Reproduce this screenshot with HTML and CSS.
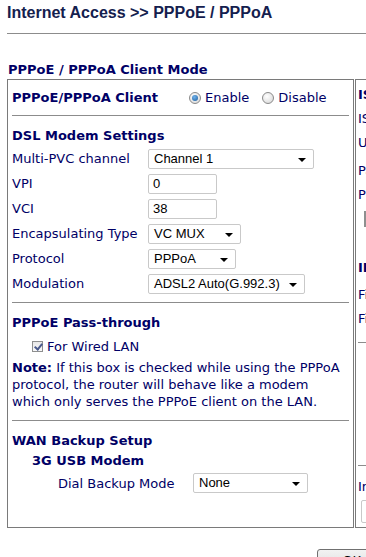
FILE: index.html
```html
<!DOCTYPE html>
<html lang="en">
<head>
    <meta charset="UTF-8">
    <title>Internet Access &gt;&gt; PPPoE / PPPoA</title>
    <link rel="stylesheet" href="styles.css">
</head>
<body>
    <h1 class="page-title">Internet Access &gt;&gt; PPPoE / PPPoA</h1>
    <div class="title-rule"></div>

    <h2 class="mode-title">PPPoE / PPPoA Client Mode</h2>

    <div class="panels">
        <div class="panel panel-left">
            <div class="client-row">
                <span class="head">PPPoE/PPPoA Client</span>
                <label class="radio"><span class="radio-dot checked"></span>Enable</label>
                <label class="radio"><span class="radio-dot"></span>Disable</label>
            </div>
            <div class="rule"></div>

            <div class="head section-head">DSL Modem Settings</div>
            <div class="form-grid">
                <span>Multi-PVC channel</span>
                <div class="select w-pvc">Channel 1</div>
                <span>VPI</span>
                <div class="text-input">0</div>
                <span>VCI</span>
                <div class="text-input">38</div>
                <span>Encapsulating Type</span>
                <div class="select w-encap">VC MUX</div>
                <span>Protocol</span>
                <div class="select w-proto">PPPoA</div>
                <span>Modulation</span>
                <div class="select w-mod">ADSL2 Auto(G.992.3)</div>
            </div>
            <div class="rule"></div>

            <div class="head section-head">PPPoE Pass-through</div>
            <label class="check-row"><span class="check-box"></span>For Wired LAN</label>
            <p class="note"><b>Note:</b> If this box is checked while using the PPPoA protocol, the router will behave like a modem which only serves the PPPoE client on the LAN.</p>
            <div class="rule"></div>

            <div class="head section-head">WAN Backup Setup</div>
            <div class="head sub-head">3G USB Modem</div>
            <div class="backup-row">
                <span>Dial Backup Mode</span>
                <div class="select w-backup">None</div>
            </div>
        </div>

        <div class="panel panel-right">
            <div class="r-line head r-first">ISP Access Setup</div>
            <div class="r-line">ISP Name</div>
            <div class="r-line">Username</div>
            <div class="r-line r-gap">Password</div>
            <div class="r-line">PPP Authentication</div>
            <div class="r-check"><span class="check-box small"></span></div>
            <div class="r-line head r-ip">IP Address From ISP</div>
            <div class="r-line">Fixed IP</div>
            <div class="r-line">Fixed IP Address</div>
            <div class="rule r-rule"></div>
            <div class="r-spacer"></div>
            <div class="rule r-rule"></div>
            <div class="r-line r-in">Index</div>
            <div class="r-input"></div>
        </div>
    </div>

    <div class="actions">
        <button class="ok-btn">OK</button>
    </div>
</body>
</html>
```

FILE: styles.css
```css
html {
    overflow: hidden;
}
body {
    margin: 0;
    padding: 0 0 0 7px;
    width: 560px;
    font-family: "DejaVu Sans", Verdana, sans-serif;
    font-size: 12px;
    color: #000066;
    background: #fff;
}
.page-title {
    margin: 0;
    padding-top: 3px;
    height: 30px;
    line-height: 20px;
    font-family: "Liberation Sans", Arial, sans-serif;
    font-size: 16px;
    font-weight: bold;
    color: #14204e;
}
.title-rule {
    height: 1px;
    background: #8c8c8c;
}
.mode-title {
    margin: 0;
    padding: 27px 0 0 1px;
    height: 18px;
    line-height: 18px;
    font-size: 13px;
    font-weight: bold;
}
.panels {
    display: flex;
    align-items: stretch;
}
.panel {
    border: 1px solid #7a7a7a;
    box-sizing: border-box;
    height: 449px;
}
.panel-left {
    width: 347px;
    padding: 0 4px;
}
.panel-right {
    margin-left: 1px;
    width: 200px;
    padding: 0 2px;
    border-right: none;
}
.head {
    font-weight: bold;
    font-size: 13px;
}
.client-row {
    display: flex;
    align-items: center;
    height: 35px;
}
.client-row .head {
    width: 177px;
}
.radio {
    display: flex;
    align-items: center;
    font-size: 13px;
    margin-right: 13px;
}
.radio-dot {
    width: 12px;
    height: 12px;
    margin-right: 4px;
    border-radius: 50%;
    border: 1px solid #8a8a8a;
    box-sizing: border-box;
    background: radial-gradient(circle at 40% 35%, #ffffff, #d4d4d4);
    position: relative;
}
.radio-dot.checked::after {
    content: "";
    position: absolute;
    left: 2px;
    top: 2px;
    width: 6px;
    height: 6px;
    border-radius: 50%;
    background: radial-gradient(circle at 40% 35%, #6fb2ec, #1d5c9a);
}
.rule {
    height: 1px;
    background: #8c8c8c;
}
.section-head {
    height: 20px;
    line-height: 20px;
    padding-top: 10px;
}
.form-grid {
    display: grid;
    grid-template-columns: 136px auto;
    grid-auto-rows: 25px;
    align-items: center;
    justify-items: start;
    font-size: 13px;
    padding-bottom: 6px;
}
.select,
.text-input {
    height: 20px;
    box-sizing: border-box;
    border: 1px solid #c9c9c9;
    border-radius: 2px;
    background: #fff;
    font-family: "Liberation Sans", Arial, sans-serif;
    font-size: 13px;
    line-height: 18px;
    color: #000;
    padding-left: 4px;
    position: relative;
}
.select {
    padding-left: 5px;
}
.select::after {
    content: "";
    position: absolute;
    right: 7px;
    top: 8px;
    border-left: 4px solid transparent;
    border-right: 4px solid transparent;
    border-top: 4px solid #000;
}
.text-input {
    width: 69px;
}
.w-pvc { width: 166px; }
.w-encap { width: 93px; }
.w-proto { width: 88px; }
.w-mod { width: 157px; }
.w-backup { width: 115px; }
.check-row {
    display: flex;
    align-items: center;
    height: 26px;
    padding-left: 20px;
    font-size: 13px;
}
.check-box {
    width: 11px;
    height: 11px;
    margin-right: 4px;
    box-sizing: border-box;
    border: 1px solid #8e8f8f;
    background: linear-gradient(#e8e8e8, #f8f8f8);
    position: relative;
}
.check-box::after {
    content: "";
    position: absolute;
    left: 3px;
    top: 0px;
    width: 3px;
    height: 6px;
    border-right: 2px solid #4a5a8c;
    border-bottom: 2px solid #4a5a8c;
    transform: rotate(40deg);
}
.check-box.small::after {
    display: none;
}
.note {
    margin: 0;
    padding: 0 0 10px;
    line-height: 17px;
    font-size: 13px;
}
.sub-head {
    padding-left: 20px;
    height: 20px;
    line-height: 20px;
}
.backup-row {
    display: flex;
    align-items: center;
    height: 24px;
    padding-left: 46px;
    font-size: 13px;
}
.backup-row span {
    width: 135px;
}
.r-line {
    height: 24px;
    line-height: 24px;
    font-size: 13px;
    white-space: nowrap;
}
.r-first {
    padding-top: 3px;
}
.r-gap {
    margin-top: 4px;
}
.r-check {
    height: 44px;
    padding: 5px 0 0 6px;
    box-sizing: border-box;
}
.r-ip {
    margin-top: 4px;
    height: 28px;
    line-height: 26px;
}
.r-rule {
    margin-top: 11px;
}
.r-spacer {
    height: 111px;
}
.r-in {
    margin-top: 9px;
}
.r-input {
    margin: 1px 0 0 3px;
    height: 21px;
    width: 120px;
    border: 1px solid #c9c9c9;
    border-radius: 2px;
}
.actions {
    padding: 21px 0 0 310px;
}
.ok-btn {
    width: 70px;
    height: 22px;
    border: 1px solid #707070;
    border-radius: 3px;
    background: linear-gradient(#f2f2f2, #dddddd);
    font-family: "Liberation Sans", Arial, sans-serif;
    font-size: 13px;
}
```
